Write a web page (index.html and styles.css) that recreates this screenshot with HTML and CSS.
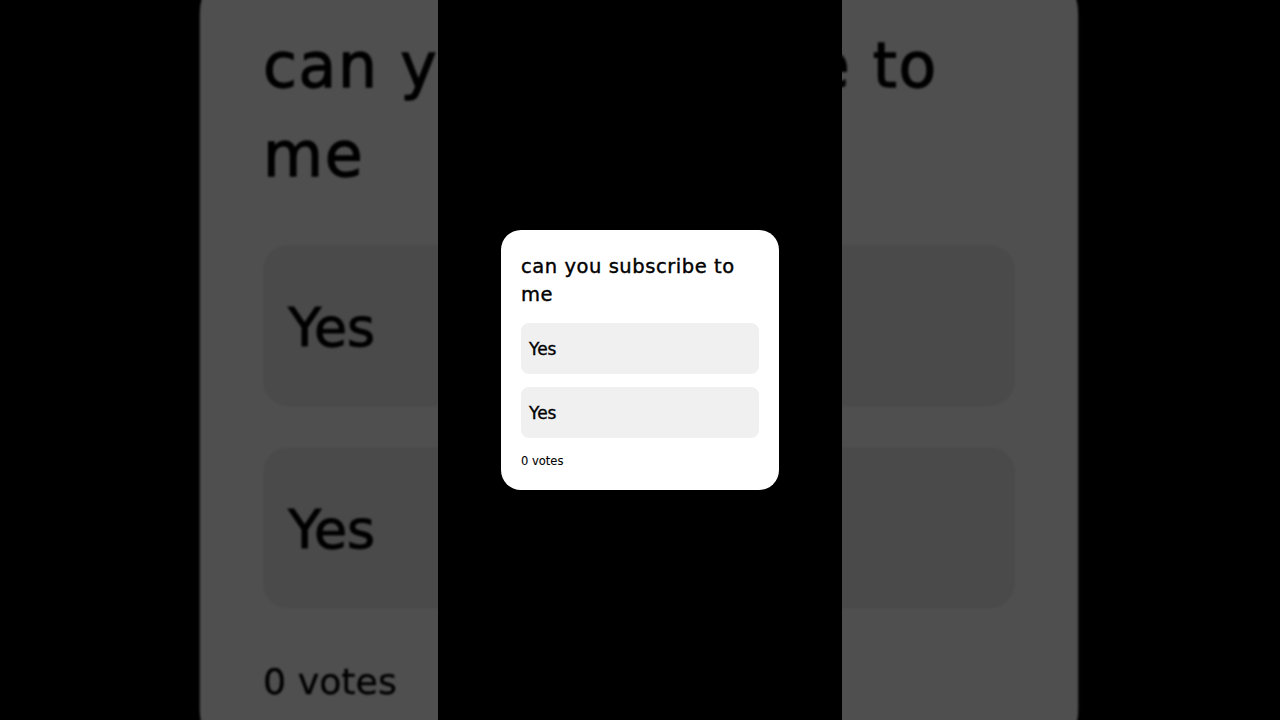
FILE: index.html
```
<!DOCTYPE html>
<html lang="en">
<head>
<meta charset="utf-8">
<title>Poll</title>
<link rel="stylesheet" href="styles.css">
</head>
<body>
<div class="stage">
  <div class="backdrop" aria-hidden="true">
    <div class="card card-big">
      <div class="title">can you subscribe to me</div>
      <div class="option">Yes</div>
      <div class="option">Yes</div>
      <div class="votes">0 votes</div>
    </div>
  </div>
  <div class="column">
    <div class="card">
      <div class="title">can you subscribe to me</div>
      <div class="option">Yes</div>
      <div class="option">Yes</div>
      <div class="votes">0 votes</div>
    </div>
  </div>
</div>
</body>
</html>
```
FILE: styles.css
```
html, body {
  margin: 0;
  padding: 0;
  background: #000;
}
.stage {
  position: relative;
  width: 1280px;
  height: 720px;
  overflow: hidden;
  display: flex;
  justify-content: center;
  align-items: center;
  font-family: "DejaVu Sans", "Noto Sans", sans-serif;
  color: #000;
}
.backdrop {
  position: absolute;
  inset: 0;
  display: flex;
  justify-content: center;
  align-items: center;
  filter: brightness(0.31) blur(1px);
}
.card-big {
  transform: translate(-1px, 2px) scale(3.16);
}
.column {
  position: relative;
  width: 404px;
  height: 720px;
  background: #000;
  display: flex;
  justify-content: center;
  align-items: center;
}
.card {
  box-sizing: border-box;
  width: 278px;
  height: 260px;
  background: #fff;
  border-radius: 20px;
  padding: 23px 20px 21px;
  display: flex;
  flex-direction: column;
  flex-shrink: 0;
}
.title {
  font-size: 19.5px;
  line-height: 28px;
  letter-spacing: 0.55px;
  margin-bottom: 14px;
  -webkit-text-stroke: 0.4px #000;
}
.option {
  height: 51px;
  box-sizing: border-box;
  background: #f0f0f0;
  border-radius: 8px;
  padding-left: 8px;
  display: flex;
  align-items: center;
  font-size: 17px;
  -webkit-text-stroke: 0.35px #000;
}
.option + .option {
  margin-top: 13px;
}
.votes {
  margin-top: 15px;
  font-size: 11.5px;
  line-height: 16px;
  -webkit-text-stroke: 0.1px #000;
}
```
